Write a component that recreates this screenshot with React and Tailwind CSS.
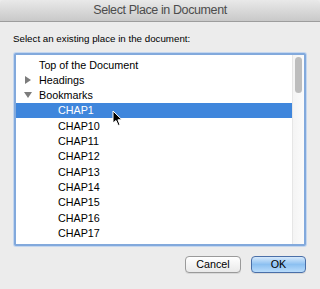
import React from 'react';

const chapters = ['CHAP1', 'CHAP10', 'CHAP11', 'CHAP12', 'CHAP13', 'CHAP14', 'CHAP15', 'CHAP16', 'CHAP17', 'CHAP18'];

function Row({ children, indent, selected }) {
  return (
    <div
      className={`h-[15.3px] flex items-center shrink-0 ${selected ? 'bg-[#3f86dc] text-white' : 'text-black'}`}
      style={{ paddingLeft: indent }}
    >
      {children}
    </div>
  );
}

function Disclosure({ open }) {
  return (
    <span className="w-[14px] flex items-center">
      {open ? (
        <svg width="8" height="6" viewBox="0 0 8 6">
          <path d="M0 0 L8 0 L4 6 Z" fill="#7c7c7c" />
        </svg>
      ) : (
        <svg width="6" height="8" viewBox="0 0 6 8">
          <path d="M0 0 L6 4 L0 8 Z" fill="#7c7c7c" />
        </svg>
      )}
    </span>
  );
}

function Cursor() {
  return (
    <svg className="absolute left-[112px] top-[110px]" width="12" height="17" viewBox="0 0 12 17">
      <path d="M1 1 L1 13 L4 10.5 L6.2 15.5 L8 14.7 L5.9 9.8 L10 9.8 Z" fill="#000" stroke="#fff" strokeWidth="1" strokeLinejoin="round" />
    </svg>
  );
}

export default function App() {
  return (
    <div className="w-[320px] h-[289px] bg-[#ececec] flex flex-col overflow-hidden relative" style={{ fontFamily: '"Liberation Sans", Arial, sans-serif' }}>
      {/* Title bar */}
      <div className="h-[22px] shrink-0 rounded-t-[4px] bg-gradient-to-b from-[#e9e9e9] to-[#c9c9c9] border-b border-[#9d9d9d] flex items-center justify-center">
        <span className="text-[12.5px] text-[#4c4c4c] tracking-[-0.4px]">Select Place in Document</span>
      </div>

      {/* Body */}
      <div className="flex flex-col px-[13px] pt-[9px]">
        <div className="text-[9.75px] text-black h-[16px] flex items-center">Select an existing place in the document:</div>

        <div className="mt-[6px] ml-[1px] w-[292px] h-[193px] border-[2px] border-[#82a9dc] rounded-[2px] shadow-[0_0_0_1px_#c3d6ef] bg-white flex overflow-hidden">
          <div className="flex-1 flex flex-col pt-[2px] text-[10.75px] overflow-hidden">
            <Row indent={23}>Top of the Document</Row>
            <Row indent={9}>
              <Disclosure />
              Headings
            </Row>
            <Row indent={8}>
              <span className="w-[15px] flex items-center"><Disclosure open /></span>
              Bookmarks
            </Row>
            {chapters.map((c, i) => (
              <Row key={c} indent={42} selected={i === 0}>
                {c}
              </Row>
            ))}
          </div>
          <div className="w-[12px] shrink-0 bg-gradient-to-r from-[#f4f4f4] to-[#fbfbfb] border-l border-[#e6e6e6] flex justify-center pt-[2px]">
            <div className="w-[7px] h-[36px] rounded-full bg-[#bdbdbd]" />
          </div>
        </div>

        {/* Buttons */}
        <div className="flex justify-end gap-[10px] mt-[10px] pr-[1px]">
          <button className="w-[56px] h-[17px] rounded-[4px] border border-[#9a9a9a] bg-gradient-to-b from-[#ffffff] to-[#e9e9e9] text-[10.75px] text-black flex items-center justify-center shadow-[0_1px_0_#d8d8d8]">
            Cancel
          </button>
          <button className="w-[55px] h-[17px] rounded-[4px] border border-[#4a6fa8] bg-gradient-to-b from-[#d6e9fb] via-[#8cc0f1] to-[#b9dcfb] text-[10.75px] text-black flex items-center justify-center shadow-[0_1px_0_#d8d8d8]">
            OK
          </button>
        </div>
      </div>

      <Cursor />
    </div>
  );
}
